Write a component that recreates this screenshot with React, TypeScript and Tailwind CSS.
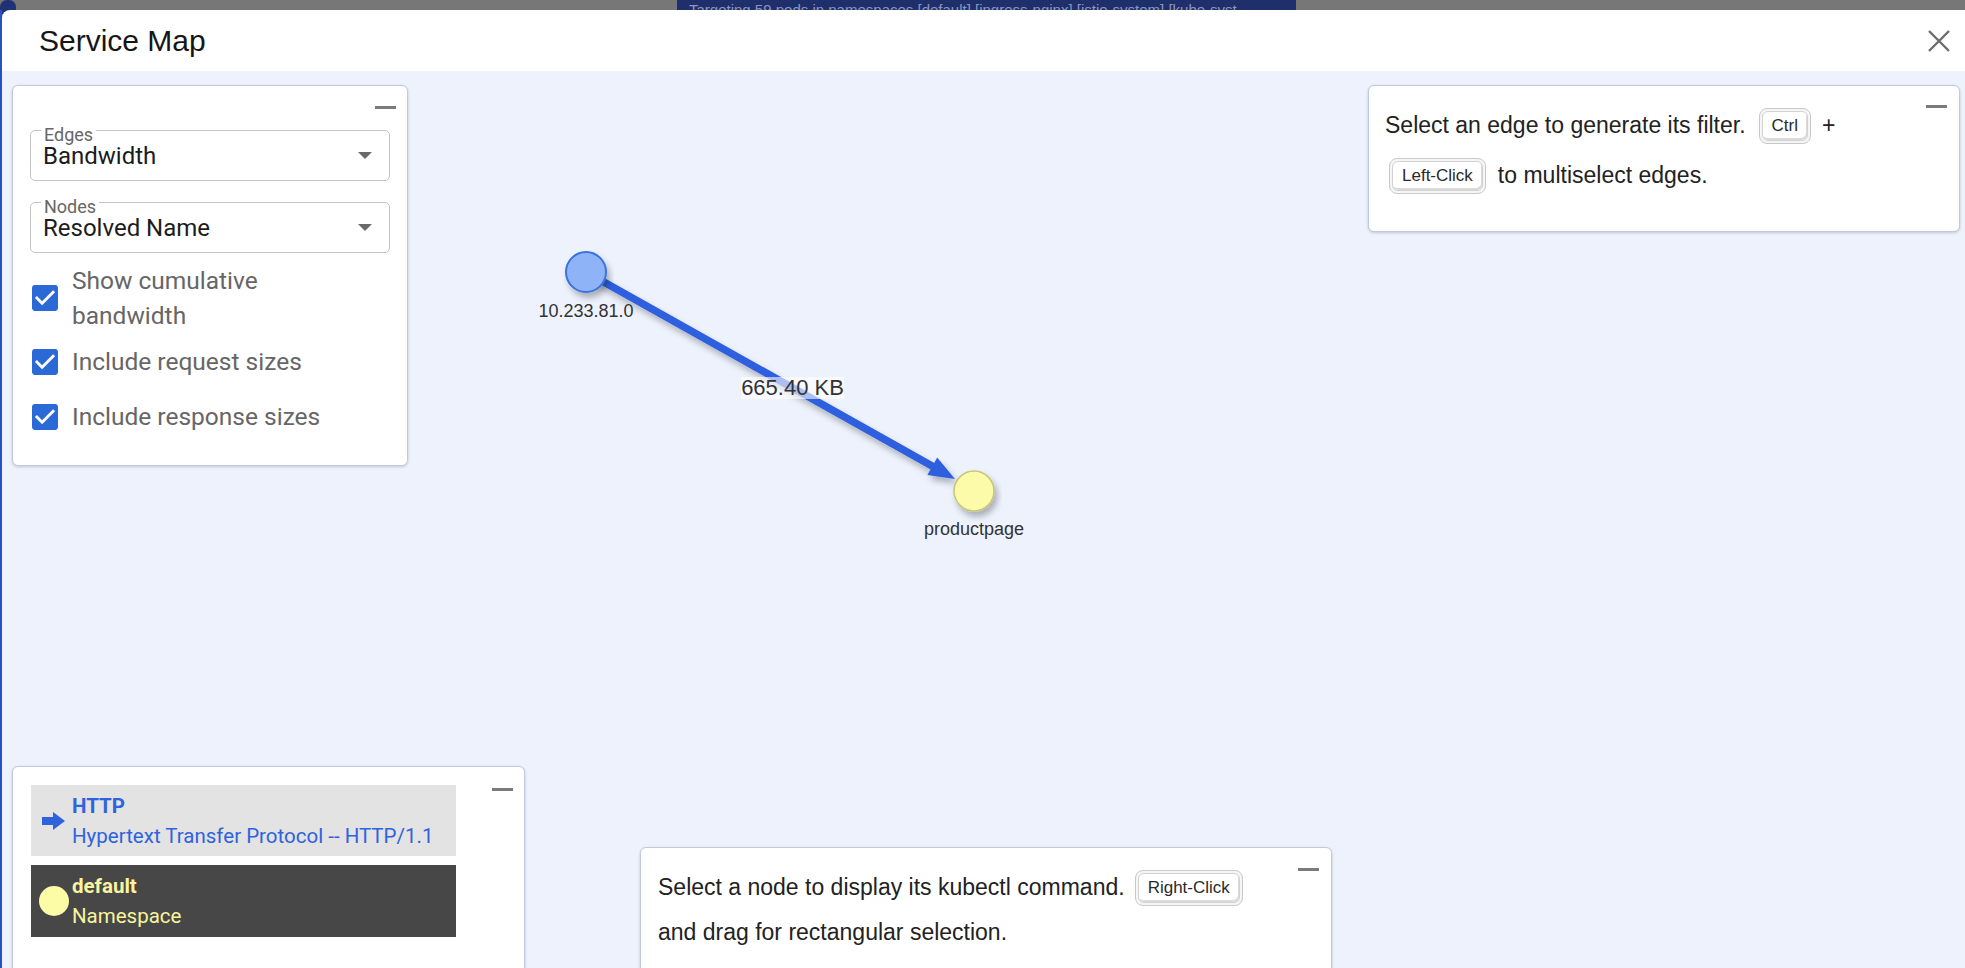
import React from "react";

function Dash() {
    return <span className="block h-[3px] w-[21px] bg-[#7b7b7b]" />;
}

function Key({ label }: { label: string }) {
    return (
        <span className="inline-flex rounded-[8px] border border-[#c9c9c9] bg-[#f5f5f5] p-[2px]">
            <span className="rounded-[6px] border border-[#d2d2d2] bg-white px-[9px] py-[4px] text-[17px] leading-[20px] text-[#2a2a2a] shadow-[inset_-1px_-2px_0_#dadada]">
                {label}
            </span>
        </span>
    );
}

function Caret() {
    return (
        <svg width="14" height="7" viewBox="7 10 10 5">
            <path d="M7 10l5 5 5-5z" fill="#6a6a6a" />
        </svg>
    );
}

function Select({ label, value }: { label: string; value: string }) {
    return (
        <div className="relative h-[51px] rounded-[5px] border border-[#c4c4c4]">
            <span className="absolute left-[10px] top-[-7px] bg-white px-[3px] text-[18px] leading-[22px] text-[#666]">
                {label}
            </span>
            <div className="flex h-full items-center justify-between pl-[12px] pr-[17px]">
                <span className="text-[24px] leading-[28px] text-[#1c1c1c]">{value}</span>
                <Caret />
            </div>
        </div>
    );
}

function Checkbox() {
    return (
        <svg width="26" height="26" viewBox="3 3 18 18" className="shrink-0">
            <path
                d="M19 3H5c-1.11 0-2 .9-2 2v14c0 1.1.89 2 2 2h14c1.11 0 2-.9 2-2V5c0-1.1-.89-2-2-2zm-9 14l-5-5 1.41-1.41L10 14.17l7.59-7.59L19 8l-9 9z"
                fill="#2a69d6"
            />
        </svg>
    );
}

function CheckRow({ label, tall }: { label: React.ReactNode; tall?: boolean }) {
    return (
        <div className={tall ? "flex h-[72px] items-center gap-[14px] pl-[2px]" : "flex h-[55px] items-center gap-[14px] pl-[2px]"}>
            <Checkbox />
            <span className="text-[24.5px] leading-[35px] text-[#666]">{label}</span>
        </div>
    );
}

function Graph() {
    return (
        <svg className="absolute left-0 top-0" width="1963" height="897" viewBox="2 71 1963 897">
            <defs>
                <filter id="shadow" x="-20%" y="-20%" width="140%" height="160%">
                    <feDropShadow dx="3" dy="5" stdDeviation="3" floodColor="#000" floodOpacity="0.28" />
                </filter>
            </defs>
            <g filter="url(#shadow)">
                <line x1="586" y1="272" x2="933" y2="466.5" stroke="#2f5fdf" strokeWidth="7.5" />
                <polygon points="955,479 927.4,475 937.2,457.6" fill="#2f5fdf" />
            </g>
            <circle cx="586" cy="272" r="20" fill="#8fb3f7" stroke="#3a72dd" strokeWidth="2" filter="url(#shadow)" />
            <circle cx="974" cy="491" r="20" fill="#fbfba9" stroke="#c6c67a" strokeWidth="1.5" filter="url(#shadow)" />
            <rect x="741" y="377" width="103" height="22" fill="#ffffff" fillOpacity="0.6" />
            <text
                x="792.5"
                y="389"
                textAnchor="middle"
                dominantBaseline="middle"
                fontFamily="'Liberation Sans', Arial, sans-serif"
                fontSize="22"
                fill="#333"
            >
                665.40 KB
            </text>
            <text
                x="586"
                y="312"
                textAnchor="middle"
                dominantBaseline="middle"
                fontFamily="'Liberation Sans', Arial, sans-serif"
                fontSize="18"
                fill="#333"
            >
                10.233.81.0
            </text>
            <text
                x="974"
                y="530"
                textAnchor="middle"
                dominantBaseline="middle"
                fontFamily="'Liberation Sans', Arial, sans-serif"
                fontSize="18"
                fill="#333"
            >
                productpage
            </text>
        </svg>
    );
}

const panel = "absolute rounded-[6px] border border-[#c3c9dc] bg-white shadow-[0_1px_3px_rgba(0,0,0,0.18)]";

export default function App() {
    return (
        <div className="relative flex h-[968px] w-[1965px] flex-col overflow-hidden bg-[#777777] font-['Liberation_Sans',Arial,sans-serif]">
            {/* page behind the dialog */}
            <div className="flex h-[10px] shrink-0">
                <div className="h-[14px] w-[16px] rounded-t-[7px] bg-[#1f3274]" />
                <div className="ml-[661px] w-[619px] overflow-hidden bg-[#1e2f6c] pl-[12px] pt-[2px] text-[15px] leading-[15px] whitespace-nowrap text-[#8d97bd]">
                    Targeting 59 pods in namespaces [default] [ingress-nginx] [istio-system] [kube-syst
                </div>
            </div>

            <div className="flex min-h-0 flex-1">
                <div className="w-[2px] shrink-0 bg-[#2553c6]" />
                <div className="flex flex-1 flex-col overflow-hidden rounded-tl-[8px] bg-white">
                    <div className="flex h-[61px] shrink-0 items-center justify-between pl-[37px] pr-[15px]">
                        <h2 className="text-[30px] font-medium text-[#161616]">Service Map</h2>
                        <svg width="22" height="22" viewBox="0 0 22 22">
                            <path d="M1 1L21 21M21 1L1 21" stroke="#6d6d6d" strokeWidth="2.4" />
                        </svg>
                    </div>

                    <div className="relative flex-1 bg-[#edf2fd]">
                        <Graph />

                        {/* settings */}
                        <div className={`${panel} left-[10px] top-[14px] h-[381px] w-[396px] font-['Roboto',sans-serif]`}>
                            <div className="flex h-[44px] justify-end pr-[11px] pt-[20px]">
                                <Dash />
                            </div>
                            <div className="flex flex-col px-[17px]">
                                <Select label="Edges" value="Bandwidth" />
                                <div className="mt-[21px]">
                                    <Select label="Nodes" value="Resolved Name" />
                                </div>
                                <div className="mt-[9px] flex flex-col">
                                    <CheckRow
                                        tall
                                        label={
                                            <>
                                                Show cumulative
                                                <br />
                                                bandwidth
                                            </>
                                        }
                                    />
                                    <CheckRow label="Include request sizes" />
                                    <CheckRow label="Include response sizes" />
                                </div>
                            </div>
                        </div>

                        {/* edge help */}
                        <div className={`${panel} left-[1366px] top-[14px] h-[147px] w-[592px]`}>
                            <div className="absolute right-[12px] top-[19px]">
                                <Dash />
                            </div>
                            <div className="flex flex-col pl-[16px] pt-[14px] text-[23px] text-[#222]">
                                <div className="flex h-[50px] items-center whitespace-nowrap">
                                    <span>Select an edge to generate its filter.</span>
                                    <span className="ml-[13px]">
                                        <Key label="Ctrl" />
                                    </span>
                                    <span className="ml-[11px]">+</span>
                                </div>
                                <div className="flex h-[50px] items-center whitespace-nowrap">
                                    <span className="ml-[4px]">
                                        <Key label="Left-Click" />
                                    </span>
                                    <span className="ml-[12px]">to multiselect edges.</span>
                                </div>
                            </div>
                        </div>

                        {/* legend */}
                        <div className={`${panel} left-[10px] top-[695px] h-[240px] w-[513px] font-['Roboto',sans-serif]`}>
                            <div className="absolute right-[11px] top-[21px]">
                                <Dash />
                            </div>
                            <div className="flex flex-col gap-[9px] pl-[18px] pt-[18px]">
                                <div className="flex h-[71px] w-[425px] items-center gap-[7px] bg-[#e3e3e3] pl-[11px]">
                                    <svg width="23" height="18" viewBox="0 0 23 18">
                                        <rect x="0" y="5" width="12" height="8" fill="#2f62dc" />
                                        <polygon points="11,0 23,9 11,18" fill="#2f62dc" />
                                    </svg>
                                    <div className="flex flex-col whitespace-nowrap text-[20.5px] leading-[30px] text-[#2f62dc]">
                                        <span className="font-bold">HTTP</span>
                                        <span>Hypertext Transfer Protocol -- HTTP/1.1</span>
                                    </div>
                                </div>
                                <div className="flex h-[72px] w-[425px] items-center gap-[3px] bg-[#474747] pl-[8px]">
                                    <span className="block h-[30px] w-[30px] rounded-full bg-[#fcfba6]" />
                                    <div className="flex flex-col whitespace-nowrap text-[20.5px] leading-[30px] text-[#f8f59e]">
                                        <span className="font-bold">default</span>
                                        <span>Namespace</span>
                                    </div>
                                </div>
                            </div>
                        </div>

                        {/* node help */}
                        <div className={`${panel} left-[638px] top-[776px] h-[200px] w-[692px]`}>
                            <div className="absolute right-[12px] top-[20px]">
                                <Dash />
                            </div>
                            <div className="flex flex-col pl-[17px] pt-[14px] text-[23px] text-[#222]">
                                <div className="flex h-[50px] items-center whitespace-nowrap">
                                    <span>Select a node to display its kubectl command.</span>
                                    <span className="ml-[10px]">
                                        <Key label="Right-Click" />
                                    </span>
                                </div>
                                <div className="flex h-[40px] items-center whitespace-nowrap">
                                    and drag for rectangular selection.
                                </div>
                            </div>
                        </div>
                    </div>
                </div>
            </div>
        </div>
    );
}
